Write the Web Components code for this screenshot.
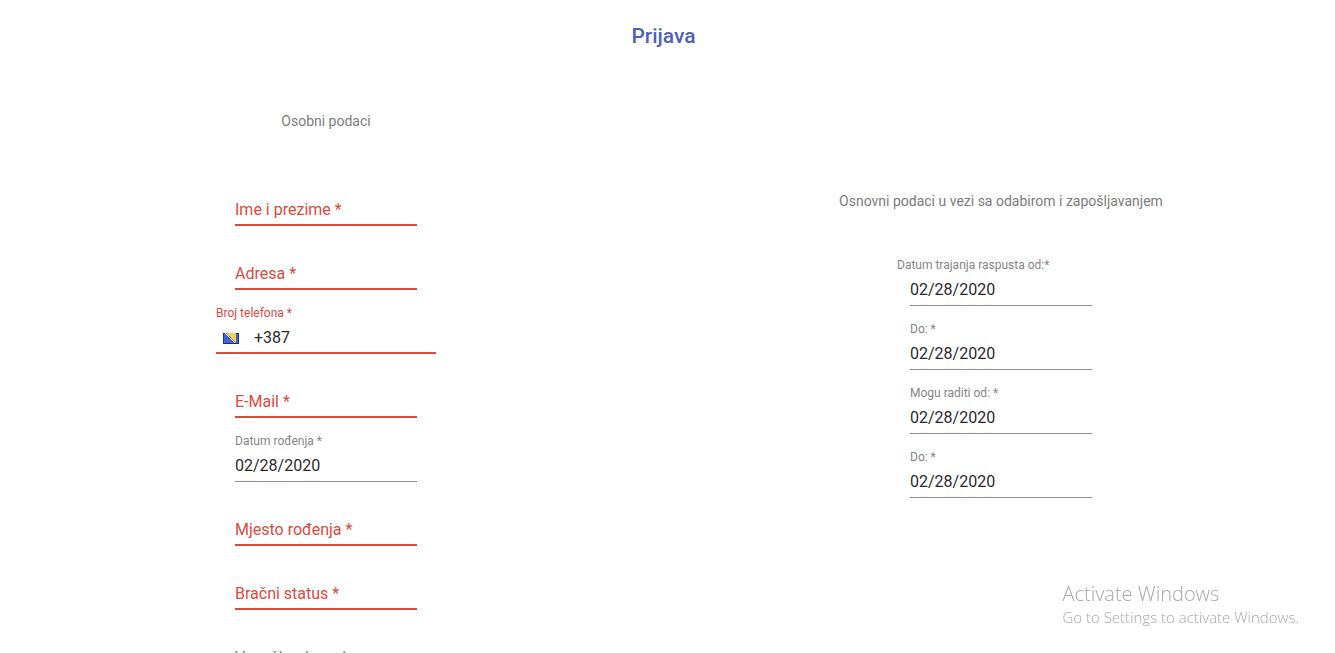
<!DOCTYPE html>
<html lang="bs">
<head>
<meta charset="utf-8">
<meta name="viewport" content="width=device-width, initial-scale=1">
<title>Prijava</title>
<style>
  html { scrollbar-width: none; }
  body { margin: 0; background: #fff; font-family: Roboto, "Liberation Sans", sans-serif; }
</style>
</head>
<body>
<application-form heading="Prijava">
  <form-section slot="personal" heading="Osobni podaci">
    <text-field label="Ime i prezime *" resting invalid></text-field>
    <text-field label="Adresa *" resting invalid></text-field>
    <phone-field label="Broj telefona *" value="+387"></phone-field>
    <text-field label="E-Mail *" resting invalid></text-field>
    <text-field label="Datum rođenja *" value="02/28/2020"></text-field>
    <text-field label="Mjesto rođenja *" resting invalid></text-field>
    <text-field label="Bračni status *" resting invalid></text-field>
    <text-field label="Vozačka dozvola" resting></text-field>
  </form-section>
  <form-section slot="work" heading="Osnovni podaci u vezi sa odabirom i zapošljavanjem">
    <text-field label="Datum trajanja raspusta od:*" value="02/28/2020" wide></text-field>
    <text-field label="Do: *" value="02/28/2020"></text-field>
    <text-field label="Mogu raditi od: *" value="02/28/2020"></text-field>
    <text-field label="Do: *" value="02/28/2020"></text-field>
  </form-section>
</application-form>
<activation-notice>
  <span slot="title">Activate Windows</span>
  <span slot="text">Go to Settings to activate Windows.</span>
</activation-notice>

<script>
class ApplicationForm extends HTMLElement {
  connectedCallback() {
    const root = this.attachShadow({ mode: "open" });
    root.innerHTML = `
      <style>
        :host { display: block; padding: 24px 8px 24px 0; }
        h1 { margin: 0; font-size: 21px; line-height: 24px; font-weight: 500; text-align: center; color: #4f5fb9; }
        form { display: grid; grid-template-columns: 1fr 1fr; column-gap: 23px; margin: 0; padding-top: 64px; }
        .work { padding-top: 80px; }
      </style>
      <h1></h1>
      <form>
        <div><slot name="personal"></slot></div>
        <div class="work"><slot name="work"></slot></div>
      </form>`;
    root.querySelector("h1").textContent = this.getAttribute("heading");
  }
}

class FormSection extends HTMLElement {
  connectedCallback() {
    const root = this.attachShadow({ mode: "open" });
    root.innerHTML = `
      <style>
        :host { display: block; }
        h2 { margin: 0 0 48px; font-size: 14px; line-height: 18px; font-weight: 400; text-align: center; color: #7c7c7c; }
        .fields { display: flex; flex-direction: column; align-items: center; gap: 16px; }
      </style>
      <section><h2></h2><div class="fields"><slot></slot></div></section>`;
    root.querySelector("h2").textContent = this.getAttribute("heading");
  }
}

class TextField extends HTMLElement {
  connectedCallback() {
    const root = this.attachShadow({ mode: "open" });
    root.innerHTML = `
      <style>
        :host { display: block; width: 182px; }
        :host([wide]) { width: 208px; }
        .field { display: grid; grid-template-rows: 16px 32px; justify-items: center; }
        label { grid-area: 1 / 1; justify-self: start; font-size: 12px; line-height: 14px; color: #868686; white-space: nowrap; }
        input { grid-area: 2 / 1; width: 182px; height: 32px; box-sizing: border-box; margin: 0; padding: 0;
          border: 0; border-bottom: 1px solid #8c8c8c; border-radius: 0; outline: 0; background: transparent;
          font: 400 16px/19px Roboto, "Liberation Sans", sans-serif; color: #2b2b2b; }
        :host([resting]) label { grid-area: 2 / 1; font-size: 16px; line-height: 32px; pointer-events: none; }
        :host([invalid]) label { color: #dc4a41; }
        :host([invalid]) input { border-bottom: 2px solid #dc4a41; }
      </style>
      <div class="field"><label for="control"></label><input id="control" type="text"></div>`;
    root.querySelector("label").textContent = this.getAttribute("label");
    root.querySelector("input").value = this.getAttribute("value") || "";
  }
}

class PhoneField extends HTMLElement {
  connectedCallback() {
    const root = this.attachShadow({ mode: "open" });
    root.innerHTML = `
      <style>
        :host { display: block; width: 220px; }
        label { display: block; height: 16px; font-size: 12px; line-height: 14px; color: #dc4a41; }
        .row { display: flex; align-items: center; height: 30px; border-bottom: 2px solid #dc4a41; }
        button { display: flex; margin: 0; padding: 2px 15px 0 7px; border: 0; background: none; }
        input { flex: 1; min-width: 0; margin: 0; padding: 0; border: 0; outline: 0; background: transparent;
          font: 400 16px/19px Roboto, "Liberation Sans", sans-serif; color: #2b2b2b; }
      </style>
      <label for="phone"></label>
      <div class="row">
        <button type="button" aria-label="Bosna i Hercegovina">
          <svg width="16" height="11" viewBox="0 0 16 11" aria-hidden="true">
            <rect width="16" height="11" fill="#17318f"/>
            <rect x="1" y="1" width="14" height="9" fill="#4663cf"/>
            <path d="M3 0H13V10Z" fill="#f2d448"/>
            <path d="M2 0L12 10" stroke="#e8ecf2" stroke-width="1"/>
          </svg>
        </button>
        <input id="phone" type="tel">
      </div>`;
    root.querySelector("label").textContent = this.getAttribute("label");
    root.querySelector("input").value = this.getAttribute("value");
  }
}

class ActivationNotice extends HTMLElement {
  connectedCallback() {
    const root = this.attachShadow({ mode: "open" });
    root.innerHTML = `
      <style>
        :host { display: block; position: fixed; right: 36px; bottom: 26px; pointer-events: none;
          font-family: "Open Sans", "Noto Sans", sans-serif; font-weight: 300; color: #a8a8a8; white-space: nowrap; }
        div { font-size: 20px; line-height: 26px; }
        p { margin: 0; font-size: 15px; line-height: 20px; }
      </style>
      <div><slot name="title"></slot></div>
      <p><slot name="text"></slot></p>`;
  }
}

customElements.define("application-form", ApplicationForm);
customElements.define("form-section", FormSection);
customElements.define("text-field", TextField);
customElements.define("phone-field", PhoneField);
customElements.define("activation-notice", ActivationNotice);
</script>
</body>
</html>
